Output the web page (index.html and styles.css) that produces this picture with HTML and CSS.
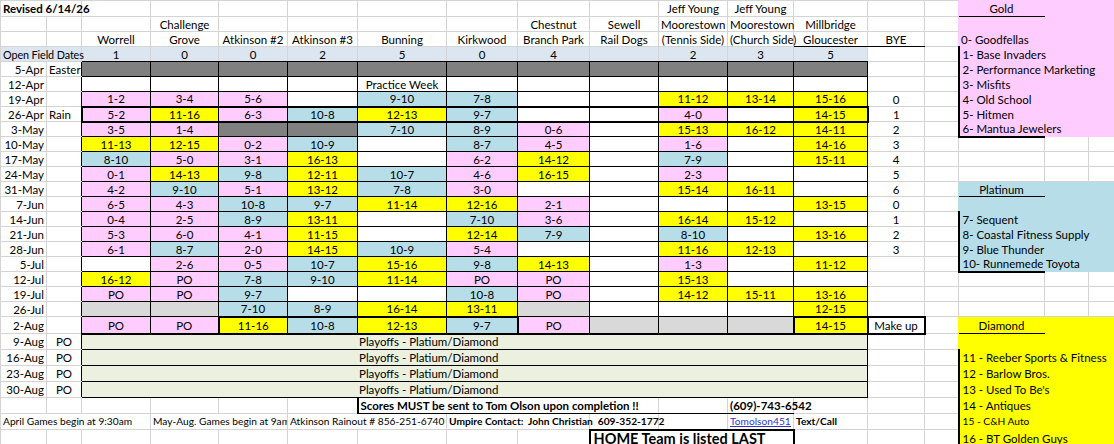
FILE: index.html
```html
<!DOCTYPE html>
<html lang="en">
<head>
<meta charset="utf-8">
<title>Schedule</title>
<link rel="stylesheet" href="styles.css">
</head>
<body>
<table class="sheet">
<colgroup>
<col class="ca"><col class="cb"><col class="cc"><col class="cd"><col class="ce"><col class="cf"><col class="cg"><col class="ch"><col class="ci"><col class="cj"><col class="ck"><col class="cl"><col class="cm"><col class="cn"><col class="co"><col class="cp"><col class="cq"><col class="cr">
</colgroup>
<tbody>
<tr class="h16">
<td colspan="2" class="left bold">Revised 6/14/26</td>
<td></td><td></td><td></td><td></td><td></td><td></td><td></td><td></td>
<td>Jeff Young</td><td>Jeff Young</td><td></td><td></td>
<td class="op"></td><td class="pk hd">Gold</td><td class="pk"></td><td class="pk"></td>
</tr>
<tr class="h15">
<td></td><td></td><td></td><td>Challenge</td><td></td><td></td><td></td><td></td>
<td>Chestnut</td><td>Sewell</td><td>Moorestown</td><td>Moorestown</td><td>Millbridge</td><td></td>
<td class="op"></td><td class="pk"></td><td class="pk"></td><td class="pk"></td>
</tr>
<tr class="h15">
<td></td><td></td><td>Worrell</td><td>Grove</td><td>Atkinson #2</td><td>Atkinson #3</td><td>Bunning</td><td>Kirkwood</td>
<td>Branch Park</td><td>Rail Dogs</td><td>(Tennis Side)</td><td>(Church Side)</td><td class="bk">Gloucester</td><td class="bk">BYE</td>
<td class="op"></td><td class="pk left">0- Goodfellas</td><td class="pk"></td><td class="pk"></td>
</tr>
<tr class="h15">
<td colspan="2" class="ofd left ofdlabel">Open Field Dates</td>
<td class="ofd bk">1</td><td class="ofd bk">0</td><td class="ofd bk">0</td><td class="ofd bk">2</td><td class="ofd bk">5</td><td class="ofd bk">0</td><td class="ofd bk">4</td><td class="ofd bk"></td><td class="ofd bk">2</td><td class="ofd bk">3</td><td class="ofd bk">5</td>
<td></td><td class="op"></td><td class="pk left lb">1- Base Invaders</td><td class="pk"></td><td class="pk"></td>
</tr>
<tr class="h15">
<td class="right">5-Apr</td><td class="left rb">Easter</td>
<td class="s g"></td><td class="s g"></td><td class="s g"></td><td class="s g"></td><td class="s g"></td><td class="s g"></td><td class="s g"></td><td class="s g"></td><td class="s g"></td><td class="s g"></td><td class="s g"></td>
<td></td><td class="op"></td><td class="pk left lb">2- Performance Marketing</td><td class="pk"></td><td class="pk"></td>
</tr>
<tr class="h15">
<td class="right">12-Apr</td><td class="rb"></td>
<td class="s"></td><td class="s"></td><td class="s"></td><td class="s"></td><td class="s">Practice Week</td><td class="s"></td><td class="s"></td><td class="s"></td><td class="s"></td><td class="s"></td><td class="s"></td>
<td></td><td class="op"></td><td class="pk left lb">3- Misfits</td><td class="pk"></td><td class="pk"></td>
</tr>
<tr class="h15">
<td class="right">19-Apr</td><td class="rb"></td>
<td class="s p">1-2</td><td class="s p">3-4</td><td class="s p">5-6</td><td class="s"></td><td class="s b">9-10</td><td class="s b">7-8</td><td class="s"></td><td class="s"></td><td class="s y">11-12</td><td class="s y">13-14</td><td class="s y">15-16</td>
<td>0</td><td class="op"></td><td class="pk left lb">4- Old School</td><td class="pk"></td><td class="pk"></td>
</tr>
<tr class="h15">
<td class="right">26-Apr</td><td class="left rb">Rain</td>
<td class="s p t2 b2 l2">5-2</td><td class="s y t2 b2">11-16</td><td class="s p t2 b2">6-3</td><td class="s b t2 b2">10-8</td><td class="s y t2 b2">12-13</td><td class="s b t2 b2">9-7</td><td class="s t2 b2"></td><td class="s t2 b2"></td><td class="s p t2 b2">4-0</td><td class="s t2 b2"></td><td class="s y t2 b2 r2">14-15</td>
<td>1</td><td class="op"></td><td class="pk left lb">5- Hitmen</td><td class="pk"></td><td class="pk"></td>
</tr>
<tr class="h15">
<td class="right">3-May</td><td class="rb"></td>
<td class="s p">3-5</td><td class="s p">1-4</td><td class="s g"></td><td class="s g"></td><td class="s b">7-10</td><td class="s b">8-9</td><td class="s p">0-6</td><td class="s"></td><td class="s y">15-13</td><td class="s y">16-12</td><td class="s y">14-11</td>
<td>2</td><td class="op"></td><td class="pk left lb b2">6- Mantua Jewelers</td><td class="pk"></td><td class="pk"></td>
</tr>
<tr class="h15">
<td class="right">10-May</td><td class="rb"></td>
<td class="s y">11-13</td><td class="s y">12-15</td><td class="s p">0-2</td><td class="s b">10-9</td><td class="s"></td><td class="s b">8-7</td><td class="s p">4-5</td><td class="s"></td><td class="s p">1-6</td><td class="s"></td><td class="s y">14-16</td>
<td>3</td><td></td><td></td><td></td><td></td>
</tr>
<tr class="h15">
<td class="right">17-May</td><td class="rb"></td>
<td class="s b">8-10</td><td class="s p">5-0</td><td class="s p">3-1</td><td class="s y">16-13</td><td class="s"></td><td class="s p">6-2</td><td class="s y">14-12</td><td class="s"></td><td class="s b">7-9</td><td class="s"></td><td class="s y">15-11</td>
<td>4</td><td></td><td></td><td></td><td></td>
</tr>
<tr class="h15">
<td class="right">24-May</td><td class="rb"></td>
<td class="s p">0-1</td><td class="s y">14-13</td><td class="s b">9-8</td><td class="s y">12-11</td><td class="s b">10-7</td><td class="s p">4-6</td><td class="s y">16-15</td><td class="s"></td><td class="s p">2-3</td><td class="s"></td><td class="s"></td>
<td>5</td><td></td><td></td><td></td><td></td>
</tr>
<tr class="h15">
<td class="right">31-May</td><td class="rb"></td>
<td class="s p">4-2</td><td class="s b">9-10</td><td class="s p">5-1</td><td class="s y">13-12</td><td class="s b">7-8</td><td class="s p">3-0</td><td class="s"></td><td class="s"></td><td class="s y">15-14</td><td class="s y">16-11</td><td class="s"></td>
<td>6</td><td class="ob"></td><td class="bl hd">Platinum</td><td class="bl"></td><td class="bl"></td>
</tr>
<tr class="h15">
<td class="right">7-Jun</td><td class="rb"></td>
<td class="s p">6-5</td><td class="s p">4-3</td><td class="s b">10-8</td><td class="s b">9-7</td><td class="s y">11-14</td><td class="s y">12-16</td><td class="s p">2-1</td><td class="s"></td><td class="s"></td><td class="s"></td><td class="s y">13-15</td>
<td>0</td><td class="ob"></td><td class="bl"></td><td class="bl"></td><td class="bl"></td>
</tr>
<tr class="h15">
<td class="right">14-Jun</td><td class="rb"></td>
<td class="s p">0-4</td><td class="s p">2-5</td><td class="s b">8-9</td><td class="s y">13-11</td><td class="s"></td><td class="s b">7-10</td><td class="s p">3-6</td><td class="s"></td><td class="s y">16-14</td><td class="s y">15-12</td><td class="s"></td>
<td>1</td><td class="ob"></td><td class="bl left lb">7- Sequent</td><td class="bl"></td><td class="bl"></td>
</tr>
<tr class="h15">
<td class="right">21-Jun</td><td class="rb"></td>
<td class="s p">5-3</td><td class="s p">6-0</td><td class="s p">4-1</td><td class="s y">11-15</td><td class="s"></td><td class="s y">12-14</td><td class="s b">7-9</td><td class="s"></td><td class="s b">8-10</td><td class="s"></td><td class="s y">13-16</td>
<td>2</td><td class="ob"></td><td class="bl left lb">8- Coastal Fitness Supply</td><td class="bl"></td><td class="bl"></td>
</tr>
<tr class="h15">
<td class="right">28-Jun</td><td class="rb"></td>
<td class="s p">6-1</td><td class="s b">8-7</td><td class="s p">2-0</td><td class="s y">14-15</td><td class="s b">10-9</td><td class="s p">5-4</td><td class="s"></td><td class="s"></td><td class="s y">11-16</td><td class="s y">12-13</td><td class="s"></td>
<td>3</td><td class="ob"></td><td class="bl left lb">9- Blue Thunder</td><td class="bl"></td><td class="bl"></td>
</tr>
<tr class="h15">
<td class="right">5-Jul</td><td class="rb"></td>
<td class="s"></td><td class="s p">2-6</td><td class="s p">0-5</td><td class="s b">10-7</td><td class="s y">15-16</td><td class="s b">9-8</td><td class="s y">14-13</td><td class="s"></td><td class="s p">1-3</td><td class="s"></td><td class="s y">11-12</td>
<td></td><td class="ob"></td><td class="bl left lb b2">10- Runnemede Toyota</td><td class="bl"></td><td class="bl"></td>
</tr>
<tr class="h15">
<td class="right">12-Jul</td><td class="rb"></td>
<td class="s y">16-12</td><td class="s p">PO</td><td class="s b">7-8</td><td class="s b">9-10</td><td class="s y">11-14</td><td class="s p">PO</td><td class="s p">PO</td><td class="s"></td><td class="s y">15-13</td><td class="s"></td><td class="s"></td>
<td></td><td></td><td></td><td></td><td></td>
</tr>
<tr class="h15">
<td class="right">19-Jul</td><td class="rb"></td>
<td class="s p">PO</td><td class="s p">PO</td><td class="s b">9-7</td><td class="s"></td><td class="s"></td><td class="s b">10-8</td><td class="s p">PO</td><td class="s"></td><td class="s y">14-12</td><td class="s y">15-11</td><td class="s y">13-16</td>
<td></td><td></td><td></td><td></td><td></td>
</tr>
<tr class="h15">
<td class="right">26-Jul</td><td class="rb"></td>
<td class="s l"></td><td class="s l"></td><td class="s b">7-10</td><td class="s b">8-9</td><td class="s y">16-14</td><td class="s y">13-11</td><td class="s l"></td><td class="s"></td><td class="s"></td><td class="s"></td><td class="s y">12-15</td>
<td></td><td></td><td></td><td></td><td></td>
</tr>
<tr class="h17">
<td class="right">2-Aug</td><td class="rb"></td>
<td class="s p b2 low">PO</td><td class="s p b2 low">PO</td><td class="s y t2 b2 l2">11-16</td><td class="s b t2 b2">10-8</td><td class="s y t2 b2">12-13</td><td class="s b t2 b2 r2">9-7</td><td class="s p b2 low">PO</td><td class="s l b2"></td><td class="s l b2"></td><td class="s l b2"></td><td class="s y t2 b2 l2 r2">14-15</td>
<td class="t2 b2 r2">Make up</td><td class="oy"></td><td class="yl hd">Diamond</td><td class="yl"></td><td class="yl"></td>
</tr>
<tr class="h16">
<td class="right">9-Aug</td><td class="rb">PO</td>
<td colspan="11" class="s po play">Playoffs - Platium/Diamond</td>
<td></td><td class="oy"></td><td class="yl"></td><td class="yl"></td><td class="yl"></td>
</tr>
<tr class="h16">
<td class="right">16-Aug</td><td class="rb">PO</td>
<td colspan="11" class="s po play">Playoffs - Platium/Diamond</td>
<td></td><td class="oy"></td><td class="yl left lb">11 - Reeber Sports &amp; Fitness</td><td class="yl"></td><td class="yl"></td>
</tr>
<tr class="h16">
<td class="right">23-Aug</td><td class="rb">PO</td>
<td colspan="11" class="s po play">Playoffs - Platium/Diamond</td>
<td></td><td class="oy"></td><td class="yl left lb">12 - Barlow Bros.</td><td class="yl"></td><td class="yl"></td>
</tr>
<tr class="h16">
<td class="right">30-Aug</td><td class="rb">PO</td>
<td colspan="11" class="s po play">Playoffs - Platium/Diamond</td>
<td></td><td class="oy"></td><td class="yl left lb">13 - Used To Be's</td><td class="yl"></td><td class="yl"></td>
</tr>
<tr class="h16">
<td></td><td></td><td></td><td></td><td></td><td></td>
<td colspan="4" class="left bold l2 bk">Scores MUST be sent to Tom Olson upon completion !!</td>
<td class="bk"></td><td class="left bold bk">(609)-743-6542</td><td></td><td></td>
<td class="oy"></td><td class="yl left lb">14 - Antiques</td><td class="yl"></td><td class="yl"></td>
</tr>
<tr class="h16 small">
<td colspan="3" class="left">April Games begin at 9:30am</td>
<td colspan="2" class="left clip">May-Aug. Games begin at 9am</td>
<td colspan="2" class="left">Atkinson Rainout # 856-251-6740</td>
<td colspan="2" class="left bold pre">Umpire Contact:  John Christian  609-352-1772</td>
<td class="b2"></td><td class="b2"></td>
<td class="left clip b2"><span class="link">Tomolson451@</span></td>
<td class="left bold">Text/Call</td><td></td>
<td class="oy"></td><td class="yl left lb">15 - C&amp;H Auto</td><td class="yl"></td><td class="yl"></td>
</tr>
<tr class="h16">
<td></td><td></td><td></td><td></td><td></td><td></td><td></td><td></td><td></td>
<td colspan="3" class="left home l2 r2 b2">HOME Team is listed LAST</td>
<td></td><td></td>
<td class="oy"></td><td class="yl left lb">16 - BT Golden Guys</td><td class="yl"></td><td class="yl"></td>
</tr>
</tbody>
</table>
</body>
</html>
```

FILE: styles.css
```css
html, body {
  margin: 0;
  padding: 0;
  background: #ffffff;
}

body {
  width: 1114px;
  height: 444px;
  overflow: hidden;
  font-family: Lato, "Liberation Sans", Arial, sans-serif;
  font-size: 11.5px;
  color: #000000;
}

.sheet {
  border-collapse: collapse;
  table-layout: fixed;
  width: 1128px;
}

.ca { width: 46px; }
.cb { width: 35px; }
.cc { width: 69px; }
.cd { width: 68px; }
.ce { width: 69px; }
.cf { width: 70px; }
.cg { width: 89px; }
.ch { width: 71px; }
.ci { width: 72px; }
.cj { width: 69px; }
.ck { width: 69px; }
.cl { width: 66px; }
.cm { width: 74px; }
.cn { width: 57px; }
.co { width: 34px; }
.cp { width: 86px; }
.cq { width: 44px; }
.cr { width: 40px; }

.h15 { height: 15px; }
.h16 { height: 16px; }
.h17 { height: 17px; }

.sheet td {
  border: 1px solid #d4d4d4;
  padding: 0 2px;
  white-space: nowrap;
  line-height: 13px;
  text-align: center;
  vertical-align: middle;
  overflow: visible;
}

.sheet td.left { text-align: left; }
.sheet td.right { text-align: right; }
.sheet td.bold { font-weight: 700; }
.sheet td.pre { white-space: pre; }
.sheet td.clip { overflow: hidden; }
.sheet td.low { padding-top: 2px; }
.sheet td.ofdlabel { font-size: 10.8px; letter-spacing: -0.1px; }

.small td { font-size: 10.2px; }

/* schedule grid */
.sheet td.s { border: 1px solid #000000; }
.sheet td.p { background: #ffccff; }
.sheet td.y { background: #ffff00; }
.sheet td.b { background: #b7dee8; }
.sheet td.g { background: #808080; }
.sheet td.l { background: #d9d9d9; }
.sheet td.ofd { background: #dce6f1; }
.sheet td.po { background: #ebf1de; }
.sheet td.play { text-align: left; padding-left: 277px; }

.sheet td.rb { border-right: 1px solid #000000; }
.sheet td.bk { border-bottom: 1px solid #000000; }

/* medium borders */
.sheet td.t2 { border-top: 2px solid #000000; }
.sheet td.b2 { border-bottom: 2px solid #000000; }
.sheet td.l2 { border-left: 2px solid #000000; }
.sheet td.r2 { border-right: 2px solid #000000; }

/* division panels */
.sheet td.pk { background: #ffccff; border-color: #ffccff; }
.sheet td.bl { background: #b7dee8; border-color: #b7dee8; }
.sheet td.yl { background: #ffff00; border-color: #ffff00; }
.sheet td.op { border-right-color: #ffccff; }
.sheet td.ob { border-right-color: #b7dee8; }
.sheet td.oy { border-right-color: #ffff00; }
.sheet td.hd { border-bottom: 1px solid #000000; }
.sheet td.lb { border-left: 2px solid #000000; padding-left: 3px; }
.sheet td.lb.b2 { border-bottom: 2px solid #000000; }

.link {
  display: block;
  overflow: hidden;
  color: #3333cc;
  text-decoration: underline;
}

.sheet td.home {
  font-weight: 700;
  font-size: 14.5px;
  line-height: 16px;
  vertical-align: top;
  padding-left: 3px;
}
```
